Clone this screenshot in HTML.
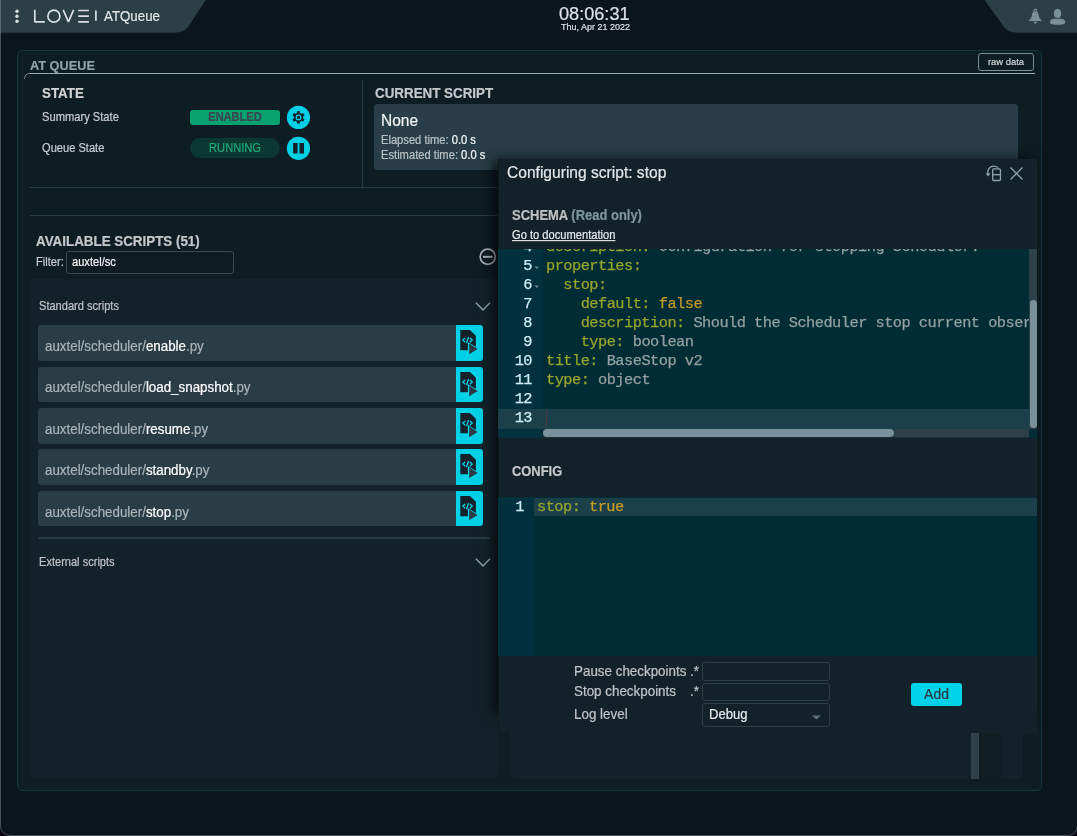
<!DOCTYPE html>
<html><head><meta charset="utf-8">
<style>
*{box-sizing:border-box;margin:0;padding:0}
html,body{width:1077px;height:836px;overflow:hidden;background:#0a0510}
body{font-family:"Liberation Sans",sans-serif;color:#c8ccd0;position:relative;-webkit-text-stroke:0.2px currentColor}
.win{position:absolute;left:0;top:0;width:1078px;height:836px;background:#0b161c;border-radius:0 0 10px 10px;overflow:hidden}
.frame{position:absolute;left:0;top:-2px;width:1078px;height:838px;border:1px solid #465055;border-radius:0 0 10px 10px}
.edge{position:absolute;left:0;top:0;width:1px;height:836px;background:#3e4a50}
.a{position:absolute;white-space:pre;line-height:1;will-change:transform}
.s{transform:scaleY(1.1);transform-origin:0 84.65%}
.panel{position:absolute;left:17px;top:50px;width:1025px;height:741px;border:1px solid #153642;border-radius:5px;background:#0e1d23}
.hl{position:absolute;height:1px;background:#2b3e47}
.row{position:absolute;left:38px;width:418px;height:35.5px;background:#2a3d47;border-radius:3px 0 0 3px}
.row .t{position:absolute;will-change:transform;transform:scaleY(1.06);transform-origin:0 84.65%;left:7px;top:14.9px;font-size:13.35px;color:#aab3b8;white-space:pre;line-height:1}
.row .t b{font-weight:normal;color:#fff}
.rbtn{position:absolute;left:418px;top:0;width:27px;height:35.5px;background:#00d1e6;border-radius:0 3px 3px 0}
.mono{font-family:"Liberation Mono",monospace;font-size:15.3px;letter-spacing:-0.51px;line-height:19px;white-space:pre;-webkit-text-stroke:0.25px currentColor}
.k{color:#97a52b}.c{color:#c49a26}.v{color:#93a1a1}
.lbl{font-size:13.4px;color:#c0c4c8}
.inp{position:absolute;border:1px solid #2f3f46;border-radius:3px;background:#13222a}
</style></head><body>
<div class="win">
<!-- header tabs -->
<svg class="a" style="left:0;top:0" width="1077" height="34">
  <path d="M1 0 H205.7 L188 27 Q184 32.7 174 32.7 H1 Z" fill="#2c3e46"/>
  <path d="M984.5 0 H1077 V32.7 H1018 Q1008 32.7 1004 27 Z" fill="#2c3e46"/>
  <g fill="#d8e0e3"><circle cx="17" cy="11.2" r="1.7"/><circle cx="17" cy="16.2" r="1.7"/><circle cx="17" cy="21.2" r="1.7"/></g>
  <g fill="none" stroke="#d8e0e3" stroke-width="1.7" stroke-linejoin="bevel">
    <path d="M34.8 9.8 V21.8 H44.8"/>
    <circle cx="53.9" cy="16.2" r="6.0"/>
    <path d="M63.2 9.8 L68.4 21.8 L73.6 9.8"/>
    <path d="M78.2 10.5 H88.9 M78.2 16.2 H88.9 M78.2 21.9 H88.9"/>
    <path d="M95.9 10.5 V20.7"/>
  </g>
  <!-- bell -->
  <circle cx="1035.3" cy="10.6" r="1.5" fill="none" stroke="#7a9099" stroke-width="1.1"/>
  <g fill="#7a9099">
    <path d="M1035.3 11.4 C1032.9 11.4 1032 13 1031.8 15.5 C1031.6 17.6 1030.6 19 1028.9 20.3 Q1028.5 21.1 1029.4 21.1 H1041.2 Q1042.1 21.1 1041.7 20.3 C1040 19 1039 17.6 1038.8 15.5 C1038.6 13 1037.7 11.4 1035.3 11.4 Z"/>
    <path d="M1033.1 21.8 H1037.5 L1035.3 24.1 Z"/>
    <ellipse cx="1057.55" cy="13.5" rx="3.65" ry="4.5"/>
    <path d="M1050 22.4 C1050 19.6 1051.6 18.7 1054.3 18.7 H1060.8 C1063.5 18.7 1065.2 19.6 1065.2 22.4 C1065.2 24.1 1062 24.8 1057.6 24.8 C1053.2 24.8 1050 24.1 1050 22.4 Z"/>
  </g>
</svg>
<div class="a s" style="left:104px;top:9.9px;font-size:13.31px;color:#e0e6e8">ATQueue</div>
<div class="a" style="left:558.5px;top:4.5px;font-size:18.14px;color:#dde3e6">08:06:31</div>
<div class="a s" style="left:561px;top:22.7px;font-size:8.99px;color:#dde3e6">Thu, Apr 21 2022</div>

<div class="panel"></div>
<div class="a" style="left:30px;top:60.2px;font-size:12.76px;font-weight:bold;color:#8fa4ac">AT QUEUE</div>
<svg class="a" style="left:0;top:0" width="1077" height="90">
  <path d="M29.5 73.5 H1035" fill="none" stroke="#98abb3" stroke-width="1"/><path d="M24.4 78.8 Q25 73.5 29.6 73.5" fill="none" stroke="#98abb3" stroke-opacity="0.75" stroke-width="1"/>
</svg>
<div class="a" style="left:978px;top:53px;width:56px;height:18px;border:1px solid #7b8f97;border-radius:3px"></div>
<div class="a" style="left:987.6px;top:57px;font-size:9.39px;color:#d0d8dc">raw data</div>

<!-- STATE -->
<div class="a s" style="left:41.7px;top:86.9px;font-size:13.36px;font-weight:bold;color:#d0d2d4">STATE</div>
<div class="a s" style="left:41.7px;top:111.5px;font-size:11.17px;color:#c8ccd0">Summary State</div>
<div class="a s" style="left:41.9px;top:142.5px;font-size:11.11px;color:#c8ccd0">Queue State</div>
<div class="a" style="left:190px;top:110px;width:90px;height:15px;background:#07a26d;border-radius:3px"></div>
<div class="a s" style="left:190px;top:112.1px;width:90px;text-align:center;font-size:11.07px;font-weight:bold;color:#3a4652">ENABLED</div>
<div class="a" style="left:190px;top:138.2px;width:90px;height:19.5px;background:#0b3832;border-radius:10px"></div>
<div class="a s" style="left:190px;top:142.9px;width:90px;text-align:center;font-size:11.1px;color:#1eaa76">RUNNING</div>
<svg class="a" style="left:286px;top:105px" width="25" height="56">
  <circle cx="12.45" cy="12.45" r="11.6" fill="#00d0e6"/>
  <circle cx="12.45" cy="43.3" r="11.6" fill="#00d0e6"/>
  <rect x="7.1" y="38" width="4.5" height="10.5" fill="#13222a"/>
  <rect x="13.5" y="38" width="4.5" height="10.5" fill="#13222a"/>
  <g fill="#13222a" transform="translate(12.5 12.4)">
    <circle r="4.7"/>
    <rect x="-1.4" y="-6.2" width="2.8" height="3"/>
    <rect x="-1.4" y="-6.2" width="2.8" height="3" transform="rotate(60)"/>
    <rect x="-1.4" y="-6.2" width="2.8" height="3" transform="rotate(120)"/>
    <rect x="-1.4" y="-6.2" width="2.8" height="3" transform="rotate(180)"/>
    <rect x="-1.4" y="-6.2" width="2.8" height="3" transform="rotate(240)"/>
    <rect x="-1.4" y="-6.2" width="2.8" height="3" transform="rotate(300)"/>
  </g>
  <circle cx="12.5" cy="12.4" r="2.3" fill="none" stroke="#00d0e6" stroke-width="1.2"/>
</svg>

<div class="a" style="left:362px;top:80px;width:1px;height:107px;background:#2b3e47"></div>
<div class="hl" style="left:30px;top:187px;width:1000px"></div>
<div class="hl" style="left:30px;top:215px;width:1000px"></div>

<!-- CURRENT SCRIPT -->
<div class="a s" style="left:374.7px;top:86.7px;font-size:13.39px;font-weight:bold;color:#c4c8cb">CURRENT SCRIPT</div>
<div class="a" style="left:374px;top:104px;width:644px;height:65.5px;background:#293e48;border-radius:4px"></div>
<div class="a s" style="left:380.6px;top:112.5px;font-size:15.48px;color:#f2f4f5">None</div>
<div class="a s" style="left:380.6px;top:135.2px;font-size:11.17px;color:#b8c0c4">Elapsed time: <span style="color:#f4f6f7">0.0 s</span></div>
<div class="a s" style="left:380.6px;top:149.8px;font-size:11.18px;color:#b8c0c4">Estimated time: <span style="color:#f4f6f7">0.0 s</span></div>

<!-- AVAILABLE SCRIPTS -->
<div class="a s" style="left:35.6px;top:234.7px;font-size:13.38px;font-weight:bold;color:#c4c8cb">AVAILABLE SCRIPTS (51)</div>
<div class="a s" style="left:35.6px;top:257px;font-size:11.12px;color:#c8ccd0">Filter:</div>
<div class="inp" style="left:66px;top:251px;width:168px;height:23px;background:#0f1c22;border-color:#3a4a52"></div>
<div class="a s" style="left:72px;top:257.3px;font-size:11.12px;color:#f0f2f3">auxtel/sc</div>
<svg class="a" style="left:478px;top:248px" width="20" height="20">
  <circle cx="9.75" cy="8.7" r="7.6" fill="none" stroke="#b4b8ba" stroke-width="1.6"/>
  <rect x="5" y="7.8" width="9.5" height="2" fill="#b4b8ba"/>
</svg>
<div class="a" style="left:30px;top:279px;width:468.5px;height:498.5px;background:#13222a;border-radius:4px"></div>
<div class="a s" style="left:38.8px;top:300.9px;font-size:11.07px;color:#c0c4c8">Standard scripts</div>
<svg class="a" style="left:470px;top:295px" width="26" height="20">
  <path d="M6 7.7 L13 14.9 L20 7.7" fill="none" stroke="#8fa5ad" stroke-width="1.5"/>
</svg>
<div class="hl" style="left:38px;top:537px;width:452px;height:2px;background:#2a3d47"></div>
<div class="a s" style="left:38.8px;top:557.3px;font-size:11.07px;color:#c0c4c8">External scripts</div>
<svg class="a" style="left:470px;top:551px" width="26" height="20">
  <path d="M6 7.7 L13 14.9 L20 7.7" fill="none" stroke="#8fa5ad" stroke-width="1.5"/>
</svg>
<svg width="0" height="0" style="position:absolute">
 <defs>
  <g id="sicon">
    <path d="M4.3 5 H14 L19.9 10.8 V25.2 H4.3 Z" fill="#13222a"/>
    <path d="M11.9 16.9 L23.3 24.1 L11.9 31.1 Z" fill="#00d1e6"/>
    <path d="M13.2 18.5 L21.6 23.9 L13.2 29.2 Z" fill="#2b3a43"/>
    <g fill="none" stroke="#00d1e6" stroke-width="1.3">
      <path d="M9.2 12.9 L6.8 15.1 L9.2 17.3 M13.9 12.9 L16.3 15.1 L13.9 17.3 M12.6 12 L10.5 18.2"/>
    </g>
  </g>
 </defs>
</svg>
<div class="row" style="top:325.2px"><div class="t">auxtel/scheduler/<b>enable</b>.py</div><div class="rbtn"><svg width="27" height="35"><use href="#sicon"/></svg></div></div>
<div class="row" style="top:366.6px"><div class="t">auxtel/scheduler/<b>load_snapshot</b>.py</div><div class="rbtn"><svg width="27" height="35"><use href="#sicon"/></svg></div></div>
<div class="row" style="top:408px"><div class="t">auxtel/scheduler/<b>resume</b>.py</div><div class="rbtn"><svg width="27" height="35"><use href="#sicon"/></svg></div></div>
<div class="row" style="top:449.4px"><div class="t">auxtel/scheduler/<b>standby</b>.py</div><div class="rbtn"><svg width="27" height="35"><use href="#sicon"/></svg></div></div>
<div class="row" style="top:490.8px"><div class="t">auxtel/scheduler/<b>stop</b>.py</div><div class="rbtn"><svg width="27" height="35"><use href="#sicon"/></svg></div></div>

<!-- right column background under modal -->
<div class="a" style="left:510px;top:279px;width:513px;height:499.5px;background:#13222a;border-radius:4px"></div>
<div class="a" style="left:971px;top:700px;width:8px;height:79px;background:#2f4048"></div>
<div class="a" style="left:979px;top:700px;width:21.5px;height:79px;background:#101d22"></div>

<!-- MODAL -->
<div class="a" style="left:498px;top:159.2px;width:539px;height:556px;background:#13222a;box-shadow:-5px 0 12px 0 rgba(0,0,0,0.7)"></div>
<div class="a" style="left:498px;top:159.2px;width:539px;height:573.8px;background:#13222a"></div>
<div class="a" style="left:498px;top:159.2px;width:1px;height:573.8px;background:#0e1a1f"></div>
<div class="a s" style="left:507px;top:165.2px;font-size:15.59px;color:#e2e6e8">Configuring script: stop</div>
<svg class="a" style="left:980px;top:160px" width="50" height="26">
  <g fill="none" stroke="#8fa5ad" stroke-width="1.3">
    <rect x="12.65" y="8.9" width="7.8" height="11.6" rx="1.3"/>
    <path d="M12.65 14.7 H20.45"/>
    <path d="M18 7.5 Q14 4.8 10.2 7.2 Q7.2 9.6 8 14.3"/>
    <path d="M30.5 7.5 L42.5 19.5 M42.5 7.5 L30.5 19.5"/>
  </g>
  <path d="M5.6 13.2 L10.4 13.4 L8.2 16.6 Z" fill="#8fa5ad"/>
</svg>
<div class="a s" style="left:512px;top:209.2px;font-size:12.98px;font-weight:bold;color:#bcc0c3">SCHEMA <span style="color:#7f949c">(Read only)</span></div>
<div class="a s" style="left:512px;top:230.4px;font-size:11.15px;color:#e4e8ea;text-decoration:underline">Go to documentation</div>

<!-- schema editor -->
<div class="a" style="left:498px;top:249px;width:539px;height:188.8px;background:#002c35;overflow:hidden">
  <div class="a" style="left:0;top:0;width:45px;height:189px;background:#01313f"></div>
  <div class="a" style="left:0;top:159.7px;width:531px;height:20px;background:#1b4049"></div>
  <div class="a mono" style="left:0;top:-11.3px;width:34px;text-align:right;color:#d0edf7">4
5
6
7
8
9
10
11
12
13</div>
  <div class="a mono" style="left:48px;top:-11.3px;color:#93a1a1"><span class="k">description:</span> Configuration for stopping Scheduler.
<span class="k">properties:</span>
  <span class="k">stop:</span>
    <span class="k">default:</span> <span class="c">false</span>
    <span class="k">description:</span> Should the Scheduler stop current observing script?
    <span class="k">type:</span> boolean
<span class="k">title:</span> BaseStop v2
<span class="k">type:</span> object
</div>
  <svg class="a" style="left:36px;top:0" width="6" height="60"><path d="M0.5 17.5 H5 L2.75 20 Z M0.5 36.5 H5 L2.75 39 Z" fill="#6e8890"/></svg>
  <div class="a" style="left:48px;top:161px;width:1px;height:17px;background:#4a3a3c"></div>
  <div class="a" style="left:531px;top:0;width:8px;height:179.6px;background:#2f4148"></div>
  <div class="a" style="left:531.5px;top:51.3px;width:7px;height:127.7px;background:#7a909a;border-radius:3.5px"></div>
  <div class="a" style="left:45px;top:179.6px;width:486px;height:9.2px;background:#1d3038"></div>
  <div class="a" style="left:45px;top:179.9px;width:351px;height:8px;background:#7a909a;border-radius:4px"></div><div class="a" style="left:396px;top:179.9px;width:135px;height:8px;background:#2f4148"></div>
</div>

<div class="a s" style="left:512px;top:466.2px;font-size:12.91px;font-weight:bold;color:#c4c8cb">CONFIG</div>
<!-- config editor -->
<div class="a" style="left:498px;top:497.3px;width:539px;height:158.7px;background:#002c35;overflow:hidden">
  <div class="a" style="left:0;top:0;width:36px;height:159px;background:#01313f"></div>
  <div class="a" style="left:36px;top:0.6px;width:503px;height:18.3px;background:#1b4049"></div>
  <div class="a mono" style="left:0;top:1.2px;width:26px;text-align:right;color:#d0edf7">1</div>
  <div class="a mono" style="left:39px;top:1.2px"><span class="k">stop:</span> <span class="c">true</span></div>
</div>

<!-- form -->
<div class="a lbl s" style="left:573.7px;top:665px">Pause checkpoints</div>
<div class="a lbl s" style="left:690px;top:665px">.*</div>
<div class="a lbl s" style="left:573.7px;top:684.6px">Stop checkpoints</div>
<div class="a lbl s" style="left:690px;top:684.6px">.*</div>
<div class="a lbl s" style="left:573.7px;top:707.7px">Log level</div>
<div class="inp" style="left:702px;top:661.5px;width:128px;height:19.5px"></div>
<div class="inp" style="left:702px;top:683px;width:128px;height:18px"></div>
<div class="inp" style="left:702px;top:703px;width:128px;height:23.5px"></div>
<div class="a s" style="left:708.8px;top:707.7px;font-size:13.1px;color:#e4e8ea">Debug</div>
<svg class="a" style="left:810px;top:714px" width="14" height="8"><path d="M1.8 1.4 H11 L6.4 5.6 Z" fill="#5f7078"/></svg>
<div class="a" style="left:910.7px;top:682.7px;width:51px;height:22.9px;background:#00d3e8;border-radius:3px"></div>
<div class="a s" style="left:910.7px;top:687.9px;width:51px;text-align:center;font-size:13.94px;color:#2b3a42">Add</div>

</div>
<div class="frame"></div>
<div style="position:absolute;left:0;top:0;width:1px;height:33px;background:#5a6a71"></div>
</body></html>
